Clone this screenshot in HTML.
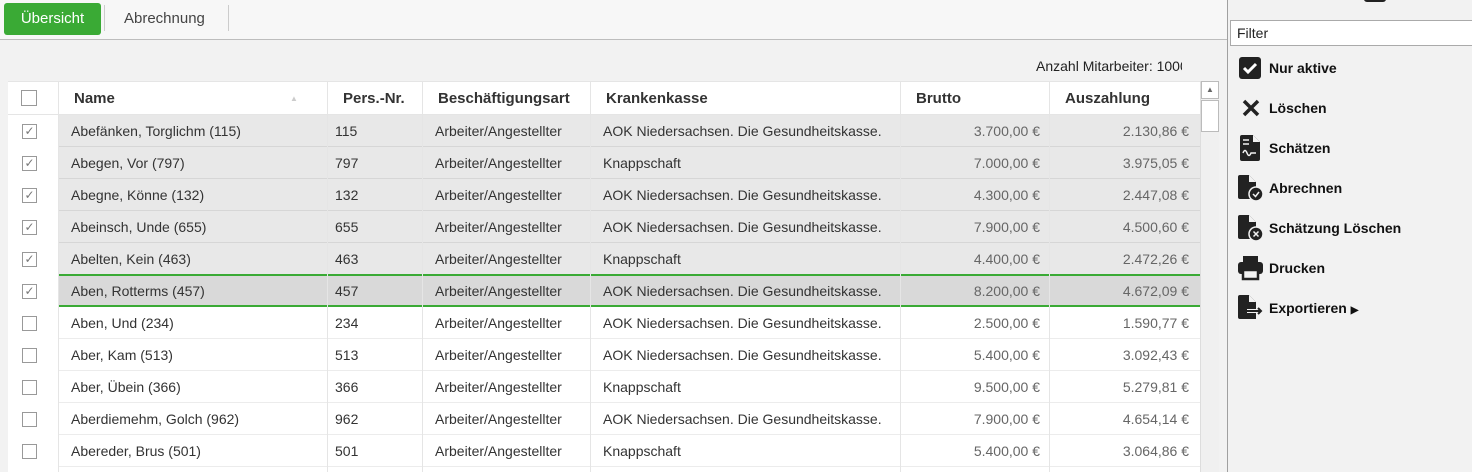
<!DOCTYPE html>
<html><head><meta charset="utf-8"><style>
*{margin:0;padding:0;box-sizing:border-box}
body{width:1472px;height:472px;overflow:hidden;background:#f2f2f2;font-family:"Liberation Sans",sans-serif;font-size:14px;color:#333;position:relative}
.abs{position:absolute}
.top{left:0;top:0;width:1227px;height:40px;background:#f7f7f7;border-bottom:1px solid #bdbdbd}
.btn{left:4px;top:3px;width:97px;height:32px;background:#3aaa35;color:#fff;border-radius:3px;font-size:15px;line-height:32px;text-align:center}
.sep{top:5px;width:1px;height:26px;background:#ccc}
.tab2{left:124px;top:3px;line-height:32px;font-size:15px;color:#444}
.cnt{left:1036px;top:58px;font-size:14px;color:#222;white-space:nowrap;width:146px;overflow:hidden}
.tbl{left:8px;top:81px;width:1192px;height:391px;background:#fff}
.hdr{left:8px;top:81px;width:1192px;height:34px;border-top:1px solid #e5e5e5;border-bottom:1px solid #e5e5e5;background:#fff}
.h{top:0;height:33px;line-height:34px;font-weight:bold;font-size:15px;color:#333;padding-left:15px;border-left:1px solid #e5e5e5}
.row{left:8px;width:1192px;height:32px}
.row div{position:absolute;top:0;height:32px;line-height:32px;white-space:nowrap}
.cb{left:14px;top:9px!important;width:15px!important;height:15px!important;border:1px solid #999;background:#fff;line-height:13px!important;font-size:12px;text-align:center;color:#777}
.bg{left:50px;width:1142px;border-bottom:1px solid #ececec}
.sel .bg{background:#e8e8e8;border-bottom:1px solid #d6d6d6}
.act .bg{background:#d9d9d9;border-top:2px solid #3aaa35;border-bottom:2px solid #3aaa35}
.num{text-align:right;color:#666}
.vl{position:absolute;top:81px;width:1px;height:391px;background:#e5e5e5}
.sb{left:1200px;top:81px;width:19px;height:391px;background:#f0f0f0;border-left:1px solid #ddd}
.panel{left:1227px;top:0;width:245px;height:472px;background:#f2f2f2;border-left:1px solid #a0a0a0}
.filter{left:1230px;top:20px;width:250px;height:26px;border:1px solid #aaa;background:#fff;font-size:14px;line-height:24px;padding-left:6px;color:#222}
.mi{left:1269px;font-weight:bold;font-size:14px;color:#111}
</style></head><body>
<div class="abs top"></div>
<div class="abs btn">Übersicht</div>
<div class="abs sep" style="left:104px"></div>
<div class="abs tab2">Abrechnung</div>
<div class="abs sep" style="left:228px"></div>
<div class="abs cnt">Anzahl Mitarbeiter: 1000</div>
<div class="abs tbl"></div>

<div class="abs row sel" style="top:115px"><div class="bg"></div><div class="cb">✓</div><div style="left:63px">Abefänken, Torglichm (115)</div><div style="left:327px">115</div><div style="left:427px">Arbeiter/Angestellter</div><div style="left:595px">AOK Niedersachsen. Die Gesundheitskasse.</div><div class="num" style="left:892px;width:140px">3.700,00 €</div><div class="num" style="left:1041px;width:140px">2.130,86 €</div></div>
<div class="abs row sel" style="top:147px"><div class="bg"></div><div class="cb">✓</div><div style="left:63px">Abegen, Vor (797)</div><div style="left:327px">797</div><div style="left:427px">Arbeiter/Angestellter</div><div style="left:595px">Knappschaft</div><div class="num" style="left:892px;width:140px">7.000,00 €</div><div class="num" style="left:1041px;width:140px">3.975,05 €</div></div>
<div class="abs row sel" style="top:179px"><div class="bg"></div><div class="cb">✓</div><div style="left:63px">Abegne, Könne (132)</div><div style="left:327px">132</div><div style="left:427px">Arbeiter/Angestellter</div><div style="left:595px">AOK Niedersachsen. Die Gesundheitskasse.</div><div class="num" style="left:892px;width:140px">4.300,00 €</div><div class="num" style="left:1041px;width:140px">2.447,08 €</div></div>
<div class="abs row sel" style="top:211px"><div class="bg"></div><div class="cb">✓</div><div style="left:63px">Abeinsch, Unde (655)</div><div style="left:327px">655</div><div style="left:427px">Arbeiter/Angestellter</div><div style="left:595px">AOK Niedersachsen. Die Gesundheitskasse.</div><div class="num" style="left:892px;width:140px">7.900,00 €</div><div class="num" style="left:1041px;width:140px">4.500,60 €</div></div>
<div class="abs row sel" style="top:243px"><div class="bg"></div><div class="cb">✓</div><div style="left:63px">Abelten, Kein (463)</div><div style="left:327px">463</div><div style="left:427px">Arbeiter/Angestellter</div><div style="left:595px">Knappschaft</div><div class="num" style="left:892px;width:140px">4.400,00 €</div><div class="num" style="left:1041px;width:140px">2.472,26 €</div></div>
<div class="abs row act" style="top:274px"><div class="bg" style="height:33px"></div><div class="cb" style="top:10px!important">✓</div><div style="left:63px;top:1px">Aben, Rotterms (457)</div><div style="left:327px;top:1px">457</div><div style="left:427px;top:1px">Arbeiter/Angestellter</div><div style="left:595px;top:1px">AOK Niedersachsen. Die Gesundheitskasse.</div><div class="num" style="left:892px;width:140px;top:1px">8.200,00 €</div><div class="num" style="left:1041px;width:140px;top:1px">4.672,09 €</div></div>
<div class="abs row" style="top:307px"><div class="bg"></div><div class="cb"></div><div style="left:63px">Aben, Und (234)</div><div style="left:327px">234</div><div style="left:427px">Arbeiter/Angestellter</div><div style="left:595px">AOK Niedersachsen. Die Gesundheitskasse.</div><div class="num" style="left:892px;width:140px">2.500,00 €</div><div class="num" style="left:1041px;width:140px">1.590,77 €</div></div>
<div class="abs row" style="top:339px"><div class="bg"></div><div class="cb"></div><div style="left:63px">Aber, Kam (513)</div><div style="left:327px">513</div><div style="left:427px">Arbeiter/Angestellter</div><div style="left:595px">AOK Niedersachsen. Die Gesundheitskasse.</div><div class="num" style="left:892px;width:140px">5.400,00 €</div><div class="num" style="left:1041px;width:140px">3.092,43 €</div></div>
<div class="abs row" style="top:371px"><div class="bg"></div><div class="cb"></div><div style="left:63px">Aber, Übein (366)</div><div style="left:327px">366</div><div style="left:427px">Arbeiter/Angestellter</div><div style="left:595px">Knappschaft</div><div class="num" style="left:892px;width:140px">9.500,00 €</div><div class="num" style="left:1041px;width:140px">5.279,81 €</div></div>
<div class="abs row" style="top:403px"><div class="bg"></div><div class="cb"></div><div style="left:63px">Aberdiemehm, Golch (962)</div><div style="left:327px">962</div><div style="left:427px">Arbeiter/Angestellter</div><div style="left:595px">AOK Niedersachsen. Die Gesundheitskasse.</div><div class="num" style="left:892px;width:140px">7.900,00 €</div><div class="num" style="left:1041px;width:140px">4.654,14 €</div></div>
<div class="abs row" style="top:435px"><div class="bg"></div><div class="cb"></div><div style="left:63px">Abereder, Brus (501)</div><div style="left:327px">501</div><div style="left:427px">Arbeiter/Angestellter</div><div style="left:595px">Knappschaft</div><div class="num" style="left:892px;width:140px">5.400,00 €</div><div class="num" style="left:1041px;width:140px">3.064,86 €</div></div>

<div class="vl" style="left:58px"></div><div class="vl" style="left:327px"></div><div class="vl" style="left:422px"></div><div class="vl" style="left:590px"></div><div class="vl" style="left:900px"></div><div class="vl" style="left:1049px"></div>

<div class="abs hdr">
<div class="abs" style="left:13px;top:8px;width:16px;height:16px;border:1px solid #999;background:#fff"></div>
<div class="abs h" style="left:50px;width:269px">Name<span style="position:absolute;left:231px;top:0;color:#ccc;font-size:8px">▲</span></div>
<div class="abs h" style="left:319px;width:95px">Pers.-Nr.</div>
<div class="abs h" style="left:414px;width:168px">Beschäftigungsart</div>
<div class="abs h" style="left:582px;width:310px">Krankenkasse</div>
<div class="abs h" style="left:892px;width:149px">Brutto</div>
<div class="abs h" style="left:1041px;width:151px">Auszahlung</div>
</div>

<div class="abs sb"><div class="abs" style="left:0;top:0;width:18px;height:18px;border:1px solid #bbb;background:#fff;font-size:8px;text-align:center;line-height:16px;color:#666">▲</div><div class="abs" style="left:0;top:19px;width:18px;height:32px;border:1px solid #bbb;background:#fff"></div></div>

<div class="abs panel"></div>
<div class="abs" style="left:1364px;top:-6px;width:22px;height:8px;background:#222;border-radius:3px"></div>
<div class="abs filter">Filter</div>

<svg class="abs" style="left:1239px;top:57px" width="22" height="22" viewBox="0 0 22 22"><rect x="0" y="0" width="22" height="22" rx="3" fill="#222"/><path d="M5 11 L9 15 L17 7" stroke="#fff" stroke-width="3" fill="none"/></svg>
<div class="abs mi" style="top:60px">Nur aktive</div>
<svg class="abs" style="left:1242px;top:99px" width="18" height="18"><path d="M2 2 L16 16 M16 2 L2 16" stroke="#222" stroke-width="3.5"/></svg>
<div class="abs mi" style="top:100px">Löschen</div>
<svg class="abs" style="left:1240px;top:135px" width="20" height="26"><path d="M2 0 H13 L20 7 V24 Q20 26 18 26 H2 Q0 26 0 24 V2 Q0 0 2 0Z" fill="#222"/><path d="M13 0 V7 H20" fill="#f2f2f2"/><path d="M3 5 H9 M3 9 H9 M3 18 Q5 13 7 18 T11 18 H16" stroke="#f2f2f2" stroke-width="1.5" fill="none"/></svg>
<div class="abs mi" style="top:140px">Schätzen</div>
<svg class="abs" style="left:1238px;top:175px" width="26" height="26"><path d="M2 0 H11 L18 7 V24 H2 Q0 24 0 22 V2 Q0 0 2 0Z" fill="#222"/><path d="M11 0 V7 H18" fill="#f2f2f2"/><circle cx="18" cy="19" r="7" fill="#222" stroke="#f2f2f2" stroke-width="1.5"/><path d="M15 19 L17.5 21.5 L21 17" stroke="#f2f2f2" stroke-width="1.5" fill="none"/></svg>
<div class="abs mi" style="top:180px">Abrechnen</div>
<svg class="abs" style="left:1238px;top:215px" width="26" height="26"><path d="M2 0 H11 L18 7 V24 H2 Q0 24 0 22 V2 Q0 0 2 0Z" fill="#222"/><path d="M11 0 V7 H18" fill="#f2f2f2"/><circle cx="18" cy="19" r="7" fill="#222" stroke="#f2f2f2" stroke-width="1.5"/><path d="M15.5 16.5 L20.5 21.5 M20.5 16.5 L15.5 21.5" stroke="#f2f2f2" stroke-width="1.5"/></svg>
<div class="abs mi" style="top:220px">Schätzung Löschen</div>
<svg class="abs" style="left:1238px;top:255px" width="26" height="26"><rect x="5" y="1" width="15" height="6" fill="#222"/><rect x="0" y="7" width="25" height="12" rx="3" fill="#222"/><rect x="5" y="15" width="15" height="9" fill="#f2f2f2" stroke="#222" stroke-width="2.5"/></svg>
<div class="abs mi" style="top:260px">Drucken</div>
<svg class="abs" style="left:1238px;top:295px" width="26" height="26"><path d="M2 0 H11 L18 7 V24 H2 Q0 24 0 22 V2 Q0 0 2 0Z" fill="#222"/><path d="M11 0 V7 H18" fill="#f2f2f2"/><path d="M9 16 H24 M20 12 L24 16 L20 20" stroke="#f2f2f2" stroke-width="4" fill="none"/><path d="M9 16 H23 M20 13 L23 16 L20 19" stroke="#222" stroke-width="2" fill="none"/></svg>
<div class="abs mi" style="top:300px">Exportieren <span style="font-size:10px">▶</span></div>
</body></html>
